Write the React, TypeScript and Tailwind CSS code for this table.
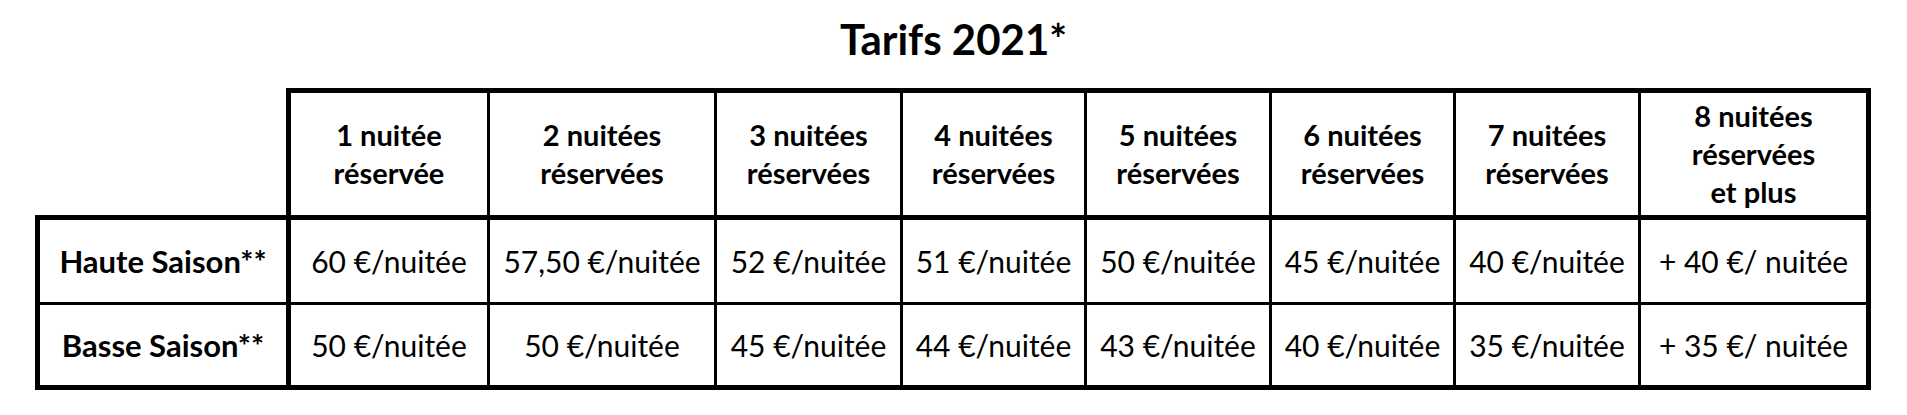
import React from "react";

const headers: string[][] = [
  ["1 nuitée", "réservée"],
  ["2 nuitées", "réservées"],
  ["3 nuitées", "réservées"],
  ["4 nuitées", "réservées"],
  ["5 nuitées", "réservées"],
  ["6 nuitées", "réservées"],
  ["7 nuitées", "réservées"],
  ["8 nuitées", "réservées", "et plus"],
];

const rows = [
  {
    label: "Haute Saison**",
    prices: ["60 €/nuitée", "57,50 €/nuitée", "52 €/nuitée", "51 €/nuitée", "50 €/nuitée", "45 €/nuitée", "40 €/nuitée", "+ 40 €/ nuitée"],
  },
  {
    label: "Basse Saison**",
    prices: ["50 €/nuitée", "50 €/nuitée", "45 €/nuitée", "44 €/nuitée", "43 €/nuitée", "40 €/nuitée", "35 €/nuitée", "+ 35 €/ nuitée"],
  },
];

// column widths, measured centre to centre of the grid lines
const widths = ["w-[251px]", "w-[200px]", "w-[227px]", "w-[186px]", "w-[184px]", "w-[185px]", "w-[184px]", "w-[185px]", "w-[229px]"];

export default function App() {
  return (
    <div className="w-[1907px] h-[415px] bg-white text-black font-['Lato','Liberation_Sans',sans-serif]">
      <h1 className="pt-[16px] h-[88px] text-center text-[42px] leading-[46px] font-bold">Tarifs 2021*</h1>
      <table className="ml-[35px] border-collapse table-fixed">
        <colgroup>
          {widths.map((w, i) => (
            <col key={i} className={w} />
          ))}
        </colgroup>
        <thead>
          <tr className="h-[127px]">
            <th className="border-0 p-0"></th>
            {headers.map((lines, i) => (
              <th
                key={i}
                className={`p-0 text-center align-middle text-[29px] leading-[38px] font-bold border-t-[5px] border-b-[5px] border-black ${
                  i === 0 ? "border-l-[5px]" : "border-l-[3px]"
                } ${i === headers.length - 1 ? "border-r-[5px]" : "border-r-[3px]"}`}
              >
                {lines.map((l, j) => (
                  <div key={j}>{l}</div>
                ))}
              </th>
            ))}
          </tr>
        </thead>
        <tbody>
          {rows.map((row, r) => (
            <tr key={r} className={r === 0 ? "h-[86px]" : "h-[84px]"}>
              <td
                className={`p-0 text-center align-middle text-[31px] font-bold border-black border-l-[5px] border-r-[5px] ${
                  r === 0 ? "border-t-[5px] border-b-[3px]" : "border-b-[5px]"
                }`}
              >
                {row.label}
              </td>
              {row.prices.map((p, i) => (
                <td
                  key={i}
                  className={`p-0 text-center align-middle text-[30px] border-black border-l-[3px] ${
                    i === row.prices.length - 1 ? "border-r-[5px]" : "border-r-[3px]"
                  } ${r === 0 ? "border-b-[3px]" : "border-b-[5px]"}`}
                >
                  {p}
                </td>
              ))}
            </tr>
          ))}
        </tbody>
      </table>
    </div>
  );
}
